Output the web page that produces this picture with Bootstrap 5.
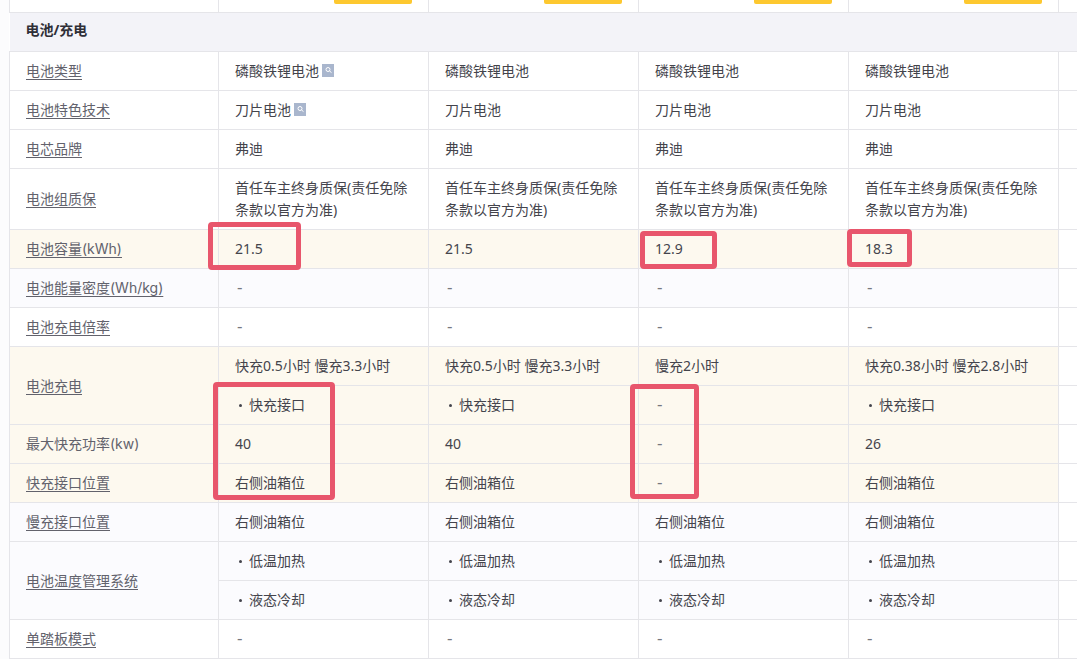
<!DOCTYPE html>
<html lang="zh-CN">
<head>
<meta charset="utf-8">
<title>电池/充电</title>
<link href="https://cdn.jsdelivr.net/npm/bootstrap@5.3.0/dist/css/bootstrap.min.css" rel="stylesheet">
<style>
html,body{height:659px;overflow:hidden;background:#fcfcfd;}
body{font-family:"Noto Sans","Noto Sans CJK SC",sans-serif;font-size:14px;color:#44444c;}
.sheet{position:relative;width:1077px;height:659px;overflow:hidden;padding-left:9px;}
.spec{table-layout:fixed;width:1260px;margin:0;border-collapse:collapse;--bs-table-bg:transparent;background:#fff;}
.spec col.c1{width:209px;}
.spec col.cv{width:210px;}
.spec td{height:39px;padding:0 16px;border:1px solid #e5e5e9;vertical-align:middle;line-height:22px;color:#44444c;background:#fff;}
.spec tr.top td{height:12px;padding:0;border-top:0;}
.spec td.lbl{font-family:Inter,"Noto Sans CJK SC",sans-serif;color:#62626c;text-decoration:underline;text-underline-offset:3px;text-decoration-thickness:1px;}
.spec td.plain{text-decoration:none;}
.spec tr.sect td{background:#f3f3f8;font-weight:700;color:#2f2f37;border-left:0;border-right:0;padding-bottom:5px;}
.spec tr.hi td:not(.tail){background:#fdf9ef;}
.spec tr.soft td:not(.tail){background:#fbfbfe;}
.spec td.tail{background:#fff;}
.spec td.dash{color:#77777f;font-size:17px;padding-left:18px;padding-bottom:2px;}
.spec td.two{height:61px;}
.ybar{display:block;width:78px;height:4px;margin:0 16px 8px auto;background:#fdc82f;border-radius:0 0 2px 2px;}
.dot{display:inline-block;width:3px;height:3px;border-radius:50%;background:#44444c;margin:0 7px 3px 4px;}
.mag{display:inline-block;vertical-align:-1px;margin-left:3px;}
.mark-box{position:absolute;border:5px solid #e8566c;border-radius:4px;}
.b1{left:208px;top:222px;width:93px;height:48px;}
.b2{left:213px;top:382px;width:122px;height:118px;}
.b3{left:640px;top:231px;width:77px;height:38px;}
.b4{left:847px;top:229px;width:65px;height:38px;}
.b5{left:630px;top:384px;width:69px;height:115px;}
</style>
</head>
<body>
<div class="sheet">
<table class="table spec">
<colgroup><col class="c1"><col class="cv"><col class="cv"><col class="cv"><col class="cv"><col class="cv"></colgroup>
<tbody>
<tr class="top"><td></td><td><span class="ybar"></span></td><td><span class="ybar"></span></td><td><span class="ybar"></span></td><td><span class="ybar"></span></td><td class="tail"></td></tr>
<tr class="sect"><td colspan="6">电池/充电</td></tr>
<tr><td class="lbl">电池类型</td><td>磷酸铁锂电池<svg class="mag" width="12" height="13" viewBox="0 0 12 13" aria-hidden="true"><rect width="12" height="13" fill="#a9b6cd"/><circle cx="6" cy="5.5" r="2" fill="none" stroke="#fff"/><path d="M7.5 7l2 1.6" stroke="#fff"/></svg></td><td>磷酸铁锂电池</td><td>磷酸铁锂电池</td><td>磷酸铁锂电池</td><td class="tail"></td></tr>
<tr><td class="lbl">电池特色技术</td><td>刀片电池<svg class="mag" width="12" height="13" viewBox="0 0 12 13" aria-hidden="true"><rect width="12" height="13" fill="#a9b6cd"/><circle cx="6" cy="5.5" r="2" fill="none" stroke="#fff"/><path d="M7.5 7l2 1.6" stroke="#fff"/></svg></td><td>刀片电池</td><td>刀片电池</td><td>刀片电池</td><td class="tail"></td></tr>
<tr><td class="lbl">电芯品牌</td><td>弗迪</td><td>弗迪</td><td>弗迪</td><td>弗迪</td><td class="tail"></td></tr>
<tr><td class="lbl two">电池组质保</td><td class="two">首任车主终身质保(责任免除条款以官方为准)</td><td class="two">首任车主终身质保(责任免除条款以官方为准)</td><td class="two">首任车主终身质保(责任免除条款以官方为准)</td><td class="two">首任车主终身质保(责任免除条款以官方为准)</td><td class="tail"></td></tr>
<tr class="hi"><td class="lbl">电池容量(kWh)</td><td>21.5</td><td>21.5</td><td>12.9</td><td>18.3</td><td class="tail"></td></tr>
<tr class="soft"><td class="lbl">电池能量密度(Wh/kg)</td><td class="dash">-</td><td class="dash">-</td><td class="dash">-</td><td class="dash">-</td><td class="tail"></td></tr>
<tr><td class="lbl">电池充电倍率</td><td class="dash">-</td><td class="dash">-</td><td class="dash">-</td><td class="dash">-</td><td class="tail"></td></tr>
<tr class="hi"><td class="lbl" rowspan="2">电池充电</td><td>快充0.5小时 慢充3.3小时</td><td>快充0.5小时 慢充3.3小时</td><td>慢充2小时</td><td>快充0.38小时 慢充2.8小时</td><td class="tail"></td></tr>
<tr class="hi"><td><span class="dot"></span>快充接口</td><td><span class="dot"></span>快充接口</td><td class="dash">-</td><td><span class="dot"></span>快充接口</td><td class="tail"></td></tr>
<tr class="hi"><td class="lbl plain">最大快充功率(kw)</td><td>40</td><td>40</td><td class="dash">-</td><td>26</td><td class="tail"></td></tr>
<tr class="hi"><td class="lbl">快充接口位置</td><td>右侧油箱位</td><td>右侧油箱位</td><td class="dash">-</td><td>右侧油箱位</td><td class="tail"></td></tr>
<tr class="soft"><td class="lbl">慢充接口位置</td><td>右侧油箱位</td><td>右侧油箱位</td><td>右侧油箱位</td><td>右侧油箱位</td><td class="tail"></td></tr>
<tr class="soft"><td class="lbl" rowspan="2">电池温度管理系统</td><td><span class="dot"></span>低温加热</td><td><span class="dot"></span>低温加热</td><td><span class="dot"></span>低温加热</td><td><span class="dot"></span>低温加热</td><td class="tail"></td></tr>
<tr class="soft"><td><span class="dot"></span>液态冷却</td><td><span class="dot"></span>液态冷却</td><td><span class="dot"></span>液态冷却</td><td><span class="dot"></span>液态冷却</td><td class="tail"></td></tr>
<tr><td class="lbl">单踏板模式</td><td class="dash">-</td><td class="dash">-</td><td class="dash">-</td><td class="dash">-</td><td class="tail"></td></tr>
</tbody>
</table>
<div class="mark-box b1"></div>
<div class="mark-box b2"></div>
<div class="mark-box b3"></div>
<div class="mark-box b4"></div>
<div class="mark-box b5"></div>
</div>
</body>
</html>
